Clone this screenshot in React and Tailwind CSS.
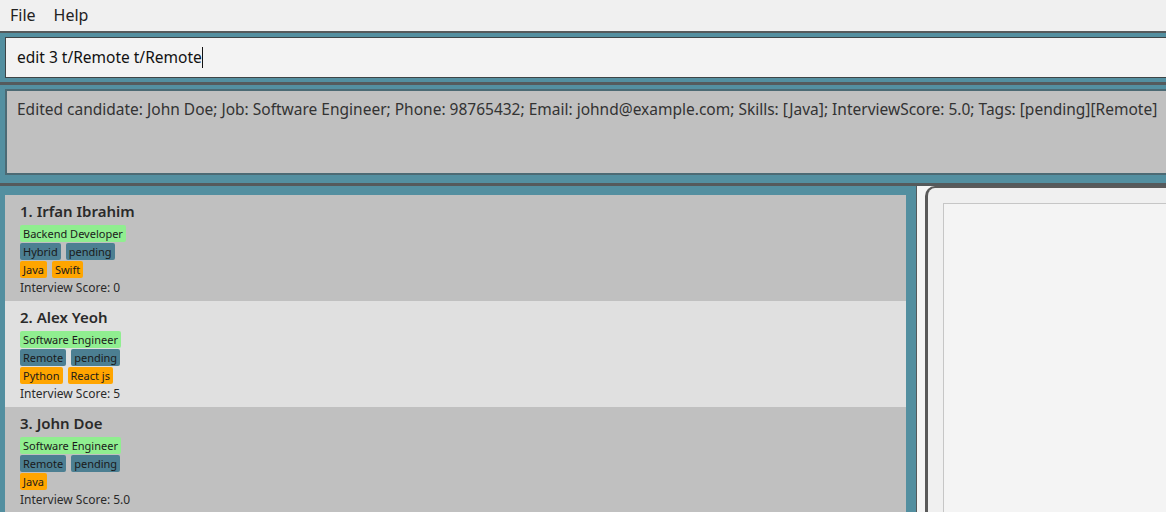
import React from 'react';

const candidates = [
    {
        id: 1,
        name: 'Irfan Ibrahim',
        job: 'Backend Developer',
        tags: ['Hybrid', 'pending'],
        skills: ['Java', 'Swift'],
        score: '0',
    },
    {
        id: 2,
        name: 'Alex Yeoh',
        job: 'Software Engineer',
        tags: ['Remote', 'pending'],
        skills: ['Python', 'React js'],
        score: '5',
    },
    {
        id: 3,
        name: 'John Doe',
        job: 'Software Engineer',
        tags: ['Remote', 'pending'],
        skills: ['Java'],
        score: '5.0',
    },
];

const Tag = ({ color, children }) => (
    <span className={`h-[17px] px-[3px] rounded-[2px] text-[11px] leading-[17px] text-[#1a1a1a] ${color}`}>
        {children}
    </span>
);

const CandidateCard = ({ c, idx }) => (
    <div className={`pl-[15px] pt-[5px] h-[106px] ${idx % 2 === 0 ? 'bg-[#c0c0c0]' : 'bg-[#e0e0e0]'}`}>
        <div className="text-[15px] leading-[22px] font-semibold text-[#2a2a2a] mb-[3px]">
            {c.id}.&nbsp;{c.name}
        </div>
        <div className="flex flex-col gap-[1px]">
            <div className="flex gap-[5px]">
                <Tag color="bg-[#90ee90]">{c.job}</Tag>
            </div>
            <div className="flex gap-[5px]">
                {c.tags.map(t => <Tag key={t} color="bg-[#4c7f92]">{t}</Tag>)}
            </div>
            <div className="flex gap-[5px]">
                {c.skills.map(s => <Tag key={s} color="bg-[#ffa500]">{s}</Tag>)}
            </div>
        </div>
        <div className="text-[12px] leading-[18px] text-[#2a2a2a] mt-[1px]">
            Interview Score: {c.score}
        </div>
    </div>
);

export default function App() {
    return (
        <div
            className="w-[1166px] h-[512px] overflow-hidden bg-[#538fa0] flex flex-col"
            style={{ fontFamily: '"Noto Sans", "Open Sans", sans-serif' }}
        >
            {/* menu bar */}
            <div className="h-[31px] shrink-0 bg-[#f0f0f0] flex items-center gap-[18px] pl-[10px] pb-[2px] text-[16px] text-[#222]">
                <span>File</span>
                <span>Help</span>
            </div>
            <div className="h-[2px] shrink-0 bg-[#555a5c]" />

            {/* command box */}
            <div className="shrink-0 pt-[4px] pb-[4px] pl-[5px]">
                <div className="h-[41px] bg-[#f3f3f3] border border-r-0 border-[#3e4446] flex items-center pl-[11px] text-[15.5px] text-[#111]">
                    <span>edit 3 t/Remote t/Remote</span>
                    <span className="w-[1px] h-[21px] bg-[#111]" />
                </div>
            </div>
            <div className="h-[3px] shrink-0 bg-[#555a5c]" />

            {/* result display */}
            <div className="shrink-0 pt-[4px] pb-[8px] pl-[5px]">
                <div className="h-[86px] bg-[#c0c0c0] border-2 border-r-0 border-[#4c6a74] pl-[10px] pt-[7px] text-[15.5px] leading-[22px] text-[#333] whitespace-nowrap">
                    Edited candidate: John Doe; Job: Software Engineer; Phone: 98765432; Email: johnd@example.com; Skills: [Java]; InterviewScore: 5.0; Tags: [pending][Remote]
                </div>
            </div>
            <div className="h-[3px] shrink-0 bg-[#555a5c]" />

            {/* bottom split */}
            <div className="flex-1 flex min-h-0">
                <div className="w-[916px] shrink-0 pt-[9px] pl-[5px] pr-[10px] overflow-hidden">
                    {candidates.map((c, i) => (
                        <CandidateCard key={c.id} c={c} idx={i} />
                    ))}
                </div>
                <div className="w-[1px] bg-[#555a5c]" />
                <div className="flex-1 bg-[#f5f5f5] pl-[8px]">
                    <div className="h-full bg-[#f0f0f0] border-l-[3px] border-t-[2px] border-[#5a5a5a] rounded-tl-[10px] pl-[15px] pt-[15px]">
                        <div className="h-full bg-[#f4f4f4] border-l border-t border-[#c6c6c6]" />
                    </div>
                </div>
            </div>
        </div>
    );
}
